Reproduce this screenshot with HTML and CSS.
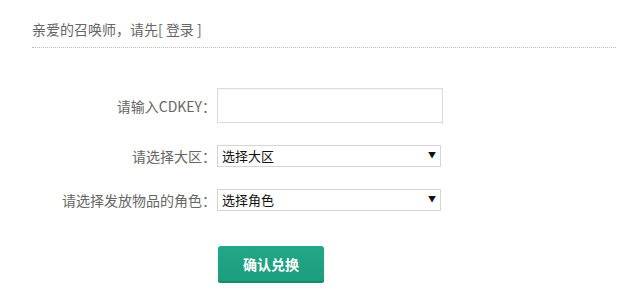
FILE: index.html
```html
<!DOCTYPE html>
<html lang="zh-CN">
<head>
<meta charset="utf-8">
<title>CDKEY兑换</title>
<link rel="stylesheet" href="styles.css">
</head>
<body>
<div class="page">
  <div class="header">亲爱的召唤师，请先[ <a class="login" href="#">登录</a> ]</div>
  <form class="form">
    <div class="row row-input">
      <label class="label">请输入CDKEY：</label>
      <input class="text-input" type="text">
    </div>
    <div class="row">
      <label class="label">请选择大区：</label>
      <div class="select-wrap">
        <select class="select"><option>选择大区</option></select>
        <span class="arrow">▼</span>
      </div>
    </div>
    <div class="row">
      <label class="label">请选择发放物品的角色：</label>
      <div class="select-wrap">
        <select class="select"><option>选择角色</option></select>
        <span class="arrow">▼</span>
      </div>
    </div>
    <div class="row row-btn">
      <span class="label"></span>
      <button class="btn" type="button">确认兑换</button>
    </div>
  </form>
</div>
</body>
</html>
```
FILE: styles.css
```css
* { box-sizing: border-box; }
html, body { margin: 0; padding: 0; background: #fff; }
body {
  font-family: "Noto Sans CJK SC", "Microsoft YaHei", "Noto Sans", sans-serif;
  font-size: 14px;
  color: #666;
}
.page {
  padding: 0 2px 0 32px;
}
.header {
  padding-top: 19px;
  padding-bottom: 8px;
  line-height: 20px;
  font-size: 14px;
  color: #666;
  border-bottom: 1px dotted #bbb;
}
.login { color: #666; text-decoration: none; }
.form {
  display: flex;
  flex-direction: column;
  gap: 22px;
  margin-top: 40px;
}
.row {
  display: grid;
  grid-template-columns: 185px auto;
  align-items: center;
  justify-content: start;
}
.label {
  text-align: right;
  padding-right: 1px;
  font-size: 14px;
  color: #666;
  line-height: 20px;
  white-space: nowrap;
}
.text-input {
  width: 226px;
  height: 35px;
  border: 1px solid #dcdcdc;
  box-shadow: inset 0 1px 2px rgba(0,0,0,0.04);
  outline: none;
  padding: 0 6px;
  font-size: 13px;
}
.select-wrap {
  position: relative;
  width: 224px;
  height: 22px;
}
.select {
  appearance: none;
  -webkit-appearance: none;
  width: 100%;
  height: 100%;
  border: 1px solid #d5d5d5;
  border-radius: 0;
  background: #fff;
  font-family: "Noto Sans CJK SC", "Microsoft YaHei", sans-serif;
  font-size: 13px;
  color: #111;
  padding: 0 20px 0 4px;
  line-height: 20px;
  outline: none;
}
.arrow {
  position: absolute;
  right: 5px;
  top: 5px;
  font-size: 8px;
  line-height: 10px;
  color: #111;
  pointer-events: none;
}
.row-btn { margin-top: 13px; }
.btn {
  margin-left: 1px;
  width: 106px;
  height: 37px;
  border: none;
  border-radius: 3px;
  background: linear-gradient(#21a787, #1c9d7e);
  box-shadow: inset 0 -2px 0 #168a6d, 0 1px 2px rgba(0,0,0,0.15);
  color: #fff;
  font-family: "Noto Sans CJK SC", "Microsoft YaHei", sans-serif;
  font-size: 14px;
  font-weight: bold;
  cursor: pointer;
  padding: 0 0 2px;
}
```
